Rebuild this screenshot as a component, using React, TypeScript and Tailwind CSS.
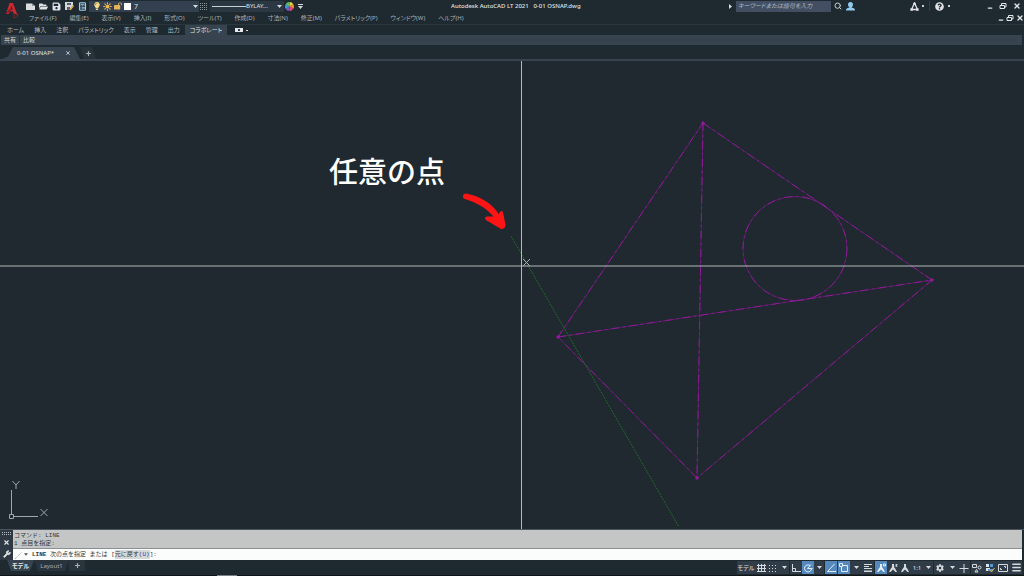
import { useState } from "react";
import type { ReactNode } from "react";
import { Search, Calculator, Sun, X, Minus, Wrench, Plus, Menu } from "lucide-react";
import { FaFolderOpen, FaSave, FaLightbulb, FaQuestionCircle, FaCog } from "react-icons/fa";
import { FaLockOpen } from "react-icons/fa6";

const menus = [
  "ファイル(F)",
  "編集(E)",
  "表示(V)",
  "挿入(I)",
  "形式(O)",
  "ツール(T)",
  "作成(D)",
  "寸法(N)",
  "修正(M)",
  "パラメトリック(P)",
  "ウィンドウ(W)",
  "ヘルプ(H)",
];

const ribbonTabs = ["ホーム", "挿入", "注釈", "パラメトリック", "表示", "管理", "出力", "コラボレート"];

const Caret = () => (
  <svg viewBox="0 0 5 3" className="w-[5px] h-[3px] shrink-0" fill="#d5dade">
    <path d="M0 0h5L2.5 3z" />
  </svg>
);

const RestoreIcon = () => (
  <svg viewBox="0 0 8 8" className="w-2 h-2" fill="none" stroke="#e2e6e9">
    <path d="M2.5 3V1.5H7V5H6" />
    <path d="M1 3.5h4.500v3H1z" />
  </svg>
);

const WindowButtons = ({ gap }: { gap: string }) => (
  <div className={`flex items-center text-[#e2e6e9] ${gap}`}>
    <button aria-label="最小化" className="pt-1">
      <Minus size={6} strokeWidth={5} />
    </button>
    <button aria-label="元に戻す">
      <RestoreIcon />
    </button>
    <button aria-label="閉じる">
      <X size={8} strokeWidth={4} />
    </button>
  </div>
);

const LogoA = () => (
  <svg viewBox="0 0 16 20" className="w-4 h-5">
    <path d="M2 14 5.500 3H9l4 11h-3L9 11.500H6L4.500 14z" fill="#c92a32" />
    <path d="M6.500 9.500h2L7.300 5.500z" fill="#1f2930" />
    <path d="M2 14l7-4.500H5z" fill="#8f1720" />
    <path d="M10 14.500v3h1.500M12 14.500h2.500M13.300 14.500v3" stroke="#a3242c" strokeWidth=".8" fill="none" />
  </svg>
);

const Header = () => (
  <header className="flex h-6 shrink-0">
    <div className="w-[26px] shrink-0 pl-1">
      <LogoA />
    </div>
    <div className="flex-1 min-w-0">
      <div className="h-3 flex items-center relative">
        <div className="flex items-center gap-1 text-[#dfe3e6]">
          <button aria-label="新規作成">
            <svg viewBox="0 0 9 9" className="w-[9px] h-[9px]">
              <path d="M0 1.500h6L9 4v4H0z" fill="#d9dde0" />
              <path d="M6 1.500V4h3z" fill="#8d959b" />
            </svg>
          </button>
          <button aria-label="開く">
            <FaFolderOpen size={9} />
          </button>
          <button aria-label="上書き保存">
            <FaSave size={9} />
          </button>
          <button aria-label="名前を付けて保存">
            <svg viewBox="0 0 9 9" className="w-[9px] h-[9px]">
              <path d="M0 0h8v5L5 8H0z" fill="#d3d7da" />
              <path d="M2 1h4v2H2zM2 5h3v3H2z" fill="#54606b" />
              <path d="M4 8l4-5 1 1-3 4z" fill="#e5a63d" />
            </svg>
          </button>
          <button aria-label="計算機" className="text-[#9fd0ea]">
            <Calculator size={9} strokeWidth={3} />
          </button>
        </div>
        <div className="ml-[2px] w-[110px] h-[11px] bg-[#334050] flex items-center gap-[2px] pl-1 pr-[1px]">
          <FaLightbulb size={8} className="text-[#f7d98a] shrink-0" />
          <Sun size={9} strokeWidth={3} fill="#f2bd52" className="text-[#f2bd52] shrink-0" />
          <FaLockOpen size={8} className="text-[#e8b45a] shrink-0" />
          <span className="w-[7px] h-[7px] bg-white shrink-0" />
          <select aria-label="画層" className="appearance-none flex-1 min-w-0 text-[7px] leading-[9px] text-[#dfe3e6] pl-[1px]">
            <option>7</option>
          </select>
          <Caret />
        </div>
        <svg viewBox="0 0 8 8" className="w-2 h-2 ml-[1px] mr-[2px]" fill="none" stroke="#8b959d" strokeDasharray="1 1">
          <path d="M0 1.500h8M0 3.500h8M0 5.500h8M0 7.500h8" />
        </svg>
        <div className="w-[74px] h-[11px] bg-[#2b3742] flex items-center pl-[2px] pr-[2px]">
          <span className="w-[34px] h-px bg-[#c9ced2] shrink-0" />
          <select aria-label="線種" className="appearance-none flex-1 min-w-0 text-[6px] leading-[9px] text-[#dfe3e6]">
            <option>BYLAY...</option>
          </select>
          <Caret />
        </div>
        <button aria-label="色" className="ml-[1px]">
          <svg viewBox="0 0 10 10" className="w-[9px] h-[9px]">
            <path d="M5 5V0A5 5 0 0 1 9.300 2.500z" fill="#f4d03f" />
            <path d="M5 5 9.300 2.500A5 5 0 0 1 9.300 7.500z" fill="#f08a35" />
            <path d="M5 5 9.300 7.500A5 5 0 0 1 5 10z" fill="#e0457b" />
            <path d="M5 5v5A5 5 0 0 1 .700 7.500z" fill="#8457c9" />
            <path d="M5 5 .700 7.500A5 5 0 0 1 .700 2.500z" fill="#3f9be0" />
            <path d="M5 5 .700 2.500A5 5 0 0 1 5 0z" fill="#5cc46a" />
          </svg>
        </button>
        <button aria-label="カスタマイズ" className="ml-1 flex flex-col items-center gap-px">
          <span className="w-[5px] h-px bg-[#d5dade]" />
          <Caret />
        </button>

        <h1 className="absolute left-[425px] text-[6px] text-[#dfe3e6] whitespace-pre font-medium">
          Autodesk AutoCAD LT 2021{"   "}0-01 OSNAP.dwg
        </h1>

        <div className="ml-auto flex items-center pr-[3px]">
          <svg viewBox="0 0 3 5" className="w-[3px] h-[5px] mr-1" fill="#d5dade">
            <path d="M0 0v5l3-2.500z" />
          </svg>
          <input
            aria-label="検索"
            placeholder="キーワードまたは語句を入力"
            className="w-[95px] h-[11px] bg-[#424f63] text-[6px] italic text-white placeholder:text-[#b3bac4] pl-[2px] outline-none"
          />
          <button aria-label="検索を実行" className="ml-[3px] text-[#c9ced2]">
            <Search size={8} strokeWidth={3} />
          </button>
          <button aria-label="サインイン" className="ml-1 text-[#8ecbef]">
            <svg viewBox="0 0 9 9" className="w-[9px] h-[9px]" fill="currentColor">
              <path d="M4.500 0C6 0 7 1 7 2.500S6 5 5.500 5.500C8 6 9 6.500 9 8.500H0c0-2 1-2.500 3.500-3C3 5 2 4 2 2.500S3 0 4.500 0z" />
            </svg>
          </button>
          <button aria-label="Autodesk App Store" className="ml-[55px] flex items-center gap-[3px]">
            <svg viewBox="0 0 9 9" className="w-[9px] h-[9px]" fill="none" stroke="#dfe3e6" strokeWidth="1.3">
              <path d="M4.500 1 1.500 7.500h6z" />
              <path d="M3.500 1h2v1.500h-2zM.700 6.500h2v2h-2zM6.300 6.500h2v2h-2z" fill="#dfe3e6" strokeWidth=".5" />
            </svg>
            <span className="w-[2px] h-[2px] bg-[#c9ced2]" />
          </button>
          <span className="w-px h-[10px] bg-[#323e48] mx-[5px]" />
          <button aria-label="ヘルプ" className="flex items-center gap-1 text-[#dfe3e6]">
            <FaQuestionCircle size={9} />
            <span className="w-[2px] h-[2px] bg-[#c9ced2]" />
          </button>
          <div className="ml-[37px]">
            <WindowButtons gap="gap-[6px]" />
          </div>
        </div>
      </div>

      <div className="h-3 flex items-center justify-between pl-[3px]">
        <nav className="flex gap-[13px] text-[6px] text-[#a9b1b7]">
          {menus.map((m) => (
            <button key={m} className="whitespace-nowrap">
              {m}
            </button>
          ))}
        </nav>
        <WindowButtons gap="gap-[2px]" />
      </div>
    </div>
  </header>
);

const Ribbon = () => {
  const [active, setActive] = useState("コラボレート");

  return (
    <div className="shrink-0">
      <div className="h-[11px] flex items-end border-t border-[#2a3741] pl-[2px] text-[6px]">
        {ribbonTabs.map((t) => (
          <button
            key={t}
            onClick={() => setActive(t)}
            className={
              t === active
                ? "h-[10px] px-[5px] bg-[#37434f] text-[#dfe3e6] whitespace-nowrap"
                : "h-[10px] px-[5px] text-[#b4bbc0] whitespace-nowrap"
            }
          >
            {t}
          </button>
        ))}
        <button aria-label="リボンの表示" className="h-[10px] ml-2 flex items-center gap-[3px]">
          <span className="w-2 h-1 bg-[#e6e9eb] flex items-center justify-center">
            <span className="w-[2px] h-[2px] bg-[#37434f]" />
          </span>
          <span className="w-[2px] h-px bg-[#d5dade]" />
        </button>
      </div>
      <div className="h-[10px] mr-[2px] ml-[1px] bg-[#37434f] flex items-center pl-[3px] text-[6px] text-[#d5dade]">
        <button>共有</button>
        <span className="w-px h-[10px] bg-[#26313a] mx-[3px]" />
        <button>比較</button>
      </div>
    </div>
  );
};

const DocumentTabs = () => (
  <div className="h-4 shrink-0 flex items-end pl-[2px] border-b-2 border-[#37434f] text-[6px]">
    <div className="h-3 w-[78px] bg-[#37434f] flex items-center justify-between pl-[15px] pr-[9px] text-[#dfe3e6] [clip-path:polygon(11px_0,calc(100%-6px)_0,100%_100%,0_100%,6px_80%)]">
      <button className="whitespace-nowrap">0-01 OSNAP*</button>
      <button aria-label="タブを閉じる">
        <X size={6} strokeWidth={3} />
      </button>
    </div>
    <button
      aria-label="新しいタブ"
      className="h-3 w-4 flex items-center justify-center bg-[#27323b] text-[#aab2b8] [clip-path:polygon(0_0,calc(100%-4px)_0,100%_100%,4px_100%)]"
    >
      <Plus size={7} strokeWidth={4} />
    </button>
  </div>
);

// construction lines of the drawing, [x1, y1, x2, y2]
const edges = [
  [703, 62, 932, 219],
  [932, 219, 697, 417],
  [697, 417, 558, 276],
  [558, 276, 703, 62],
  [703, 62, 697, 417],
  [558, 276, 932, 219],
];

const Canvas = () => (
  <main className="flex-1 relative min-h-[300px] overflow-hidden bg-[#1f292f]">
    <svg
      viewBox="0 0 1024 468"
      preserveAspectRatio="xMidYMid slice"
      className="absolute inset-0 w-full h-full"
      fill="none"
    >
      <g stroke="#5c1f68">
        {edges.map((e) => (
          <line key={e.join()} x1={e[0]} y1={e[1]} x2={e[2]} y2={e[3]} />
        ))}
        <circle cx="795" cy="187.5" r="52" />
      </g>
      <g stroke="#8f1a97" strokeDasharray="8 4 2 4">
        {edges.map((e) => (
          <line key={e.join()} x1={e[0]} y1={e[1]} x2={e[2]} y2={e[3]} />
        ))}
        <circle cx="795" cy="187.5" r="52" />
      </g>
      <g stroke="#a817ad">
        <path d="M701 62h4M703 60v4M930 219h4M932 217v4M695 417h4M697 415v4M556 276h4M558 274v4" />
      </g>
      <path d="M511 175 679 466" stroke="#216a2a" strokeDasharray="2 1" />
      <path d="M0 205h1024" stroke="#b4b9b9" />
      <path d="M521.500 0v468" stroke="#b4b9b9" />
      <path d="M523 198l7 7M530 198l-7 7" stroke="#a9afb1" />

      <g stroke="#a0a7aa">
        <path d="M11.500 429v24M14 455.500h24M9.500 453.500h4v4h-4z" />
        <path d="M12.500 420l3.500 4 3.500-4M16 424v4M40.500 448l7 7M47.500 448l-7 7" />
      </g>

      <path
        d="M466 132.500C480 135 493 143 498.500 153L500.500 150.500Q502.500 149 503 151.500L505.500 163.500Q505.500 168 501 168L486 159Q483.500 156.500 487 155.500L493.500 155.500C486 147 478 142 463.500 137.500Q461.500 133 466 132.500z"
        fill="#fd1515"
      />
    </svg>
    <p className="absolute left-[329px] top-[89px] text-[29px] leading-[44px] font-medium text-white whitespace-nowrap [font-feature-settings:normal]">
      任意の点
    </p>
  </main>
);

const CommandLine = () => (
  <section className="shrink-0 flex h-[31px] border-t border-[#4b555d] pr-[2px]">
    <div className="w-[13px] bg-[#2f3944] flex flex-col items-center justify-between py-[2px] text-[#dfe3e6]">
      <span className="w-[9px] h-[3px] border-y border-dotted border-[#b4bbc0]" />
      <button aria-label="閉じる">
        <X size={7} strokeWidth={4} />
      </button>
      <button aria-label="カスタマイズ">
        <Wrench size={8} strokeWidth={2} fill="#dfe3e6" />
      </button>
    </div>
    <div className="flex-1 min-w-0 font-['Liberation_Mono','Noto_Sans_CJK_JP',monospace] [font-feature-settings:normal] text-[6px] text-[#30373c]">
      <div className="h-[19px] bg-[#c4c6c5] pl-[1px] pt-[2px] leading-[8px] border-b border-[#8a8f92]">
        <p>コマンド: LINE</p>
        <p>1 点目を指定:</p>
      </div>
      <div className="h-[11px] bg-[#fbfdfc] flex items-center">
        <svg viewBox="0 0 10 10" className="w-[10px] h-[10px]" stroke="#8d9599" strokeDasharray="1 1">
          <path d="M2 9 9 2" />
        </svg>
        <svg viewBox="0 0 5 3" className="w-1 h-[3px] ml-[1px] mr-1" fill="#4b5257">
          <path d="M0 0h5L2.500 3z" />
        </svg>
        <label htmlFor="command" className="whitespace-pre">
          <b>LINE</b> 次の点を指定 または [
        </label>
        <button className="h-[9px] bg-[#d5d8d9]">
          元に戻す(<span className="text-[#3b3bd0]">U</span>)
        </button>
        <span>]:</span>
        <input id="command" className="flex-1 min-w-0 h-[9px] outline-none" />
      </div>
    </div>
  </section>
);

type ToolProps = { label: string; on?: boolean; children: ReactNode };

const Tool = ({ label, on, children }: ToolProps) => (
  <button
    aria-label={label}
    className={
      on
        ? "w-3 h-[13px] flex items-center justify-center bg-[#5589bd] text-[#e3edf6]"
        : "w-3 h-[13px] flex items-center justify-center text-[#d5dade]"
    }
  >
    {children}
  </button>
);

const Glyph = ({ d }: { d: string }) => (
  <svg viewBox="0 0 10 10" className="w-[10px] h-[10px]" fill="none" stroke="currentColor">
    <path d={d} />
  </svg>
);

const Drop = () => (
  <button aria-label="オプション" className="w-[10px] h-[13px] flex items-center justify-center">
    <Caret />
  </button>
);

// annotation scale figure, shared by three tools
const Figure = ({ mark }: { mark?: string }) => (
  <svg viewBox="0 0 10 10" className="w-[10px] h-[10px]" stroke="currentColor" fill="none">
    <path d="M4 1h2v3l1.500 2L9 9H7.500L5 6.500 2.500 9H1l1.500-3L4 4z" fill="currentColor" stroke="none" />
    {mark && <path d={mark} />}
  </svg>
);

const StatusBar = () => (
  <footer className="h-[15px] shrink-0 flex items-center justify-between bg-[#1f2930] text-[6px]">
    <div className="flex items-center pl-[7px] self-start">
      <button className="h-[11px] w-[27px] bg-[#37434f] text-[#e6e9eb] font-bold [clip-path:polygon(0_0,100%_0,calc(100%-4px)_100%,4px_100%)]">
        モデル
      </button>
      <button className="h-[11px] w-[35px] bg-[#29343d] text-[#a4acb2] [clip-path:polygon(0_0,100%_0,calc(100%-4px)_100%,4px_100%)]">
        Layout1
      </button>
      <button aria-label="レイアウトを追加" className="h-[11px] w-4 bg-[#29343d] flex items-center justify-center text-[#aab2b8]">
        <Plus size={7} strokeWidth={4} />
      </button>
    </div>
    <div className="flex items-center gap-[1px] pr-[2px] text-[#d5dade]">
      <div className="h-[13px] flex items-center bg-[#303c48]">
        <button className="w-[18px] font-medium whitespace-nowrap">モデル</button>
        <Tool label="グリッド">
          <Glyph d="M2.500 1v8M5.500 1v8M8.500 1v8M1 2.500h9M1 5.500h9M1 8.500h9" />
        </Tool>
        <Tool label="スナップ">
          <svg viewBox="0 0 10 10" className="w-[10px] h-[10px]" stroke="currentColor" strokeDasharray="1 2">
            <path d="M1 2.500h8M1 5.500h8M1 8.500h8" />
          </svg>
        </Tool>
        <Drop />
      </div>
      <div className="h-[13px] flex items-center bg-[#303c48]">
        <Tool label="直交モード">
          <Glyph d="M1.500 1v7.500H10M1.500 5.500h3v3" />
        </Tool>
        <Tool label="極トラッキング" on>
          <Glyph d="M7 2.500A3.500 3.500 0 1 0 8.500 5.500M4.500 5.500h5M4.500 5.500 8 1.500" />
        </Tool>
        <Drop />
      </div>
      <div className="h-[13px] flex items-center gap-[1px] bg-[#303c48]">
        <Tool label="オブジェクトスナップトラッキング" on>
          <Glyph d="M8.500 1 1.500 8.500H10" />
        </Tool>
        <Tool label="オブジェクトスナップ" on>
          <Glyph d="M3.500 2.500h5v6h-6V4M.5.500h3v3h-3z" />
        </Tool>
        <Drop />
        <Tool label="線の太さ">
          <Glyph d="M1 1.500h8M1 3.500h5M1 5.500h8M1 8h8M1 8.500h8" />
        </Tool>
      </div>
      <div className="h-[13px] flex items-center bg-[#303c48]">
        <Tool label="注釈オブジェクト" on>
          <Figure mark="M7.500 1h2v2h-2z" />
        </Tool>
        <Tool label="自動尺度">
          <Figure mark="M7 3.500 9.500 1M8 1l1 3" />
        </Tool>
        <Tool label="注釈尺度">
          <Figure />
        </Tool>
        <button className="w-3 font-medium">1:1</button>
        <Drop />
      </div>
      <div className="h-[13px] flex items-center gap-[1px] bg-[#303c48]">
        <Tool label="ワークスペース">
          <FaCog size={8} />
        </Tool>
        <Drop />
        <Tool label="注釈モニター">
          <Glyph d="M5 1v9M.5 5.500h9" />
        </Tool>
      </div>
      <div className="h-[13px] flex items-center gap-[1px] bg-[#303c48]">
        <Tool label="選択の分離">
          <Glyph d="M.5 1.500h4v3h-4zM7.500 3a1.500 1.500 0 1 1 0 3 1.500 1.500 0 1 1 0-3M3 9l1.500-2.500L6 9z" />
        </Tool>
        <Tool label="ハードウェア">
          <svg viewBox="0 0 10 10" className="w-[10px] h-[10px]">
            <path d="M1 1h3v3H1zM1 5h4v3H1z" fill="#dfe3e6" />
            <path d="M5 1h3v3H5z" fill="#4e9ae0" />
            <path d="M3 6h5v2H3z" fill="#4e9ae0" />
            <path d="m5 7 1.500 2L9.500 5" stroke="#e2b93f" fill="none" />
          </svg>
        </Tool>
        <Tool label="フルスクリーン">
          <Glyph d="M.5 1.500h9v7h-9zM6 3.500h1.500V5M4 6.500H2.500V5" />
        </Tool>
        <Tool label="カスタマイズ">
          <Menu size={11} strokeWidth={3} />
        </Tool>
      </div>
    </div>
  </footer>
);

export default function App() {
  return (
    <div className="min-h-screen flex flex-col bg-[#1f2930] font-['Noto_Sans','Noto_Sans_CJK_JP',sans-serif] [font-feature-settings:'palt'] leading-none">
      <Header />
      <Ribbon />
      <DocumentTabs />
      <Canvas />
      <CommandLine />
      <StatusBar />
      <div className="h-px shrink-0 bg-[#10151a] pl-[217px]">
        <div className="w-5 h-px bg-[#7b8085]" />
      </div>
    </div>
  );
}
